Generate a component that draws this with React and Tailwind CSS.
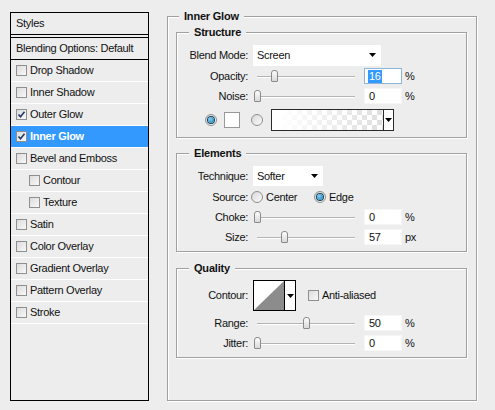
import React from "react";

const styleItems = [
  { label: "Drop Shadow" },
  { label: "Inner Shadow" },
  { label: "Outer Glow", checked: true },
  { label: "Inner Glow", checked: true, selected: true },
  { label: "Bevel and Emboss" },
  { label: "Contour", indent: true },
  { label: "Texture", indent: true },
  { label: "Satin" },
  { label: "Color Overlay" },
  { label: "Gradient Overlay" },
  { label: "Pattern Overlay" },
  { label: "Stroke" },
];

function CheckBox({ checked }) {
  return (
    <span className="relative flex h-[11px] w-[11px] shrink-0 items-center justify-center border border-[#8e8f8f] bg-[linear-gradient(135deg,#dcdcdc,#f8f8f8)]">
      {checked && (
        <svg width="9" height="9" viewBox="0 0 9 9" className="absolute">
          <path d="M1.5 4.5 L3.5 6.8 L7.5 1.8" fill="none" stroke="#21396b" strokeWidth="1.6" />
        </svg>
      )}
    </span>
  );
}

function Radio({ on }) {
  return (
    <span className="flex h-[12px] w-[12px] shrink-0 items-center justify-center rounded-full border border-[#8e8f8f] bg-[linear-gradient(135deg,#d8d8d8,#fbfbfb)]">
      {on && (
        <span className="h-[6px] w-[6px] rounded-full bg-[radial-gradient(circle_at_35%_35%,#7fd0f5,#1d78a8)] ring-1 ring-[#1a3f5c]" />
      )}
    </span>
  );
}

function Arrow() {
  return (
    <svg width="7" height="4" viewBox="0 0 7 4">
      <path d="M0 0 H7 L3.5 4 Z" fill="#000" />
    </svg>
  );
}

function Slider({ pos }) {
  const left = 4 + (pos * 98) / 100 - 3;
  return (
    <div className="relative h-[20px] w-[106px] shrink-0">
      <div className="absolute left-[4px] right-[4px] top-[10px] h-[1px] bg-[#b4b4b4] shadow-[0_1px_0_#fff]" />
      <div
        className="absolute top-[4px] h-[12px] w-[7px] rounded-t-[3px] rounded-b-[1px] border border-[#8a8a8a] bg-[linear-gradient(to_bottom,#fdfdfd,#d9d9d9)]"
        style={{ left: `${left}px` }}
      />
    </div>
  );
}

function NumberBox({ value, focused }) {
  return (
    <div
      className={
        "ml-[5px] flex h-[16px] w-[38px] shrink-0 items-center bg-white pl-[3px] " +
        (focused ? "border border-[#8fb4dc]" : "border border-[#f6f6f6]")
      }
    >
      {focused ? (
        <span className="bg-[#3399ff] px-[1px] leading-[13px] text-white">{value}</span>
      ) : (
        <span className="px-[1px] leading-[13px]">{value}</span>
      )}
    </div>
  );
}

function Label({ children }) {
  return <div className="w-[72px] shrink-0 pr-[1px] text-right">{children}</div>;
}

function SliderRow({ label, pos, value, unit, focused }) {
  return (
    <div className="flex h-[20px] items-center">
      <Label>{label}</Label>
      <div className="ml-[4px]">
        <Slider pos={pos} />
      </div>
      <NumberBox value={value} focused={focused} />
      <span className="ml-[3px]">{unit}</span>
    </div>
  );
}

function Group({ title, legendLeft, className, children }) {
  return (
    <div
      className={
        "relative border border-[#a0a0a0] shadow-[inset_1px_1px_0_#fff,1px_1px_0_#fff] " + className
      }
    >
      <div
        className={
          "absolute top-[-7px] bg-[#ededed] px-[5px] text-[11px] font-bold leading-[13px] tracking-[-0.2px] " +
          legendLeft
        }
      >
        {title}
      </div>
      {children}
    </div>
  );
}

export default function App() {
  return (
    <div className="flex h-[410px] w-[495px] bg-[#ededed] pl-[10px] pt-[12px] font-['Liberation_Sans',Arial,sans-serif] text-[11px] leading-[13px] tracking-[-0.3px] text-[#111]">
      {/* style list */}
      <div className="flex h-[389px] w-[139px] shrink-0 flex-col border border-black">
        <div className="flex h-[22px] items-center border-b border-black pl-[5px]">Styles</div>
        <div className="h-[2px]" />
        <div className="flex h-[23px] items-center border-y border-black pl-[5px]">
          Blending Options: Default
        </div>
        {styleItems.map((it) => (
          <div
            key={it.label}
            className={
              "flex h-[22px] items-center gap-[3px] border-b border-white " +
              (it.indent ? "pl-[18px] " : "pl-[5px] ") +
              (it.selected ? "bg-[#3399ff] font-bold text-white" : "")
            }
          >
            <CheckBox checked={it.checked} />
            <span>{it.label}</span>
          </div>
        ))}
      </div>

      {/* settings */}
      <Group title="Inner Glow" legendLeft="left-[11px]" className="ml-[18px] mt-[4px] h-[385px] w-[310px] pl-[8px] pt-[15px]">
        <Group title="Structure" legendLeft="left-[12px]" className="h-[106px] w-[291px]">
          <div className="mt-[11px] flex h-[22px] items-center">
            <Label>Blend Mode:</Label>
            <div className="ml-[4px] flex h-[21px] w-[128px] items-center justify-between bg-white pl-[4px] pr-[5px]">
              <span>Screen</span>
              <Arrow />
            </div>
          </div>
          <SliderRow label="Opacity:" pos={17} value="16" unit="%" focused />
          <SliderRow label="Noise:" pos={0} value="0" unit="%" />
          <div className="mt-[3px] flex h-[22px] items-center pl-[28px]">
            <Radio on />
            <div className="ml-[7px] h-[16px] w-[16px] border border-[#9a9a9a] bg-white" />
            <div className="ml-[11px]">
              <Radio />
            </div>
            <div className="ml-[8px] flex h-[22px] w-[123px] border border-[#2a2a2a]">
              <div className="flex-1 bg-[conic-gradient(#dedede_25%,#fff_0_50%,#dedede_0_75%,#fff_0)] bg-[length:10px_10px]">
                <div className="h-full w-full bg-[linear-gradient(to_right,#fff_5%,rgba(255,255,255,0))]" />
              </div>
              <div className="flex w-[10px] items-center justify-center border-l border-[#2a2a2a] bg-white">
                <Arrow />
              </div>
            </div>
          </div>
        </Group>

        <Group title="Elements" legendLeft="left-[12px]" className="mt-[15px] h-[99px] w-[291px]">
          <div className="mt-[12px] flex h-[20px] items-center">
            <Label>Technique:</Label>
            <div className="ml-[4px] flex h-[20px] w-[70px] items-center justify-between bg-white pl-[4px] pr-[5px]">
              <span>Softer</span>
              <Arrow />
            </div>
          </div>
          <div className="mt-[1px] flex h-[20px] items-center">
            <Label>Source:</Label>
            <div className="ml-[2px]">
              <Radio />
            </div>
            <span className="ml-[3px] w-[48px]">Center</span>
            <Radio on />
            <span className="ml-[3px]">Edge</span>
          </div>
          <SliderRow label="Choke:" pos={0} value="0" unit="%" />
          <SliderRow label="Size:" pos={28} value="57" unit="px" />
        </Group>

        <Group title="Quality" legendLeft="left-[12px]" className="mt-[16px] h-[90px] w-[291px]">
          <div className="mt-[11px] flex h-[31px] items-center">
            <Label>Contour:</Label>
            <div className="ml-[4px] flex h-[31px] w-[43px] border border-black bg-white">
              <svg width="30" height="29" viewBox="0 0 30 29" className="block">
                <polygon points="0,29 30,0 30,29" fill="#8c8c8c" />
              </svg>
              <div className="flex flex-1 items-center justify-center border-l border-black">
                <Arrow />
              </div>
            </div>
            <div className="ml-[12px] flex items-center gap-[3px]">
              <CheckBox />
              <span>Anti-aliased</span>
            </div>
          </div>
          <div className="mt-[2px]" />
          <SliderRow label="Range:" pos={50} value="50" unit="%" />
          <SliderRow label="Jitter:" pos={0} value="0" unit="%" />
        </Group>
      </Group>
    </div>
  );
}
